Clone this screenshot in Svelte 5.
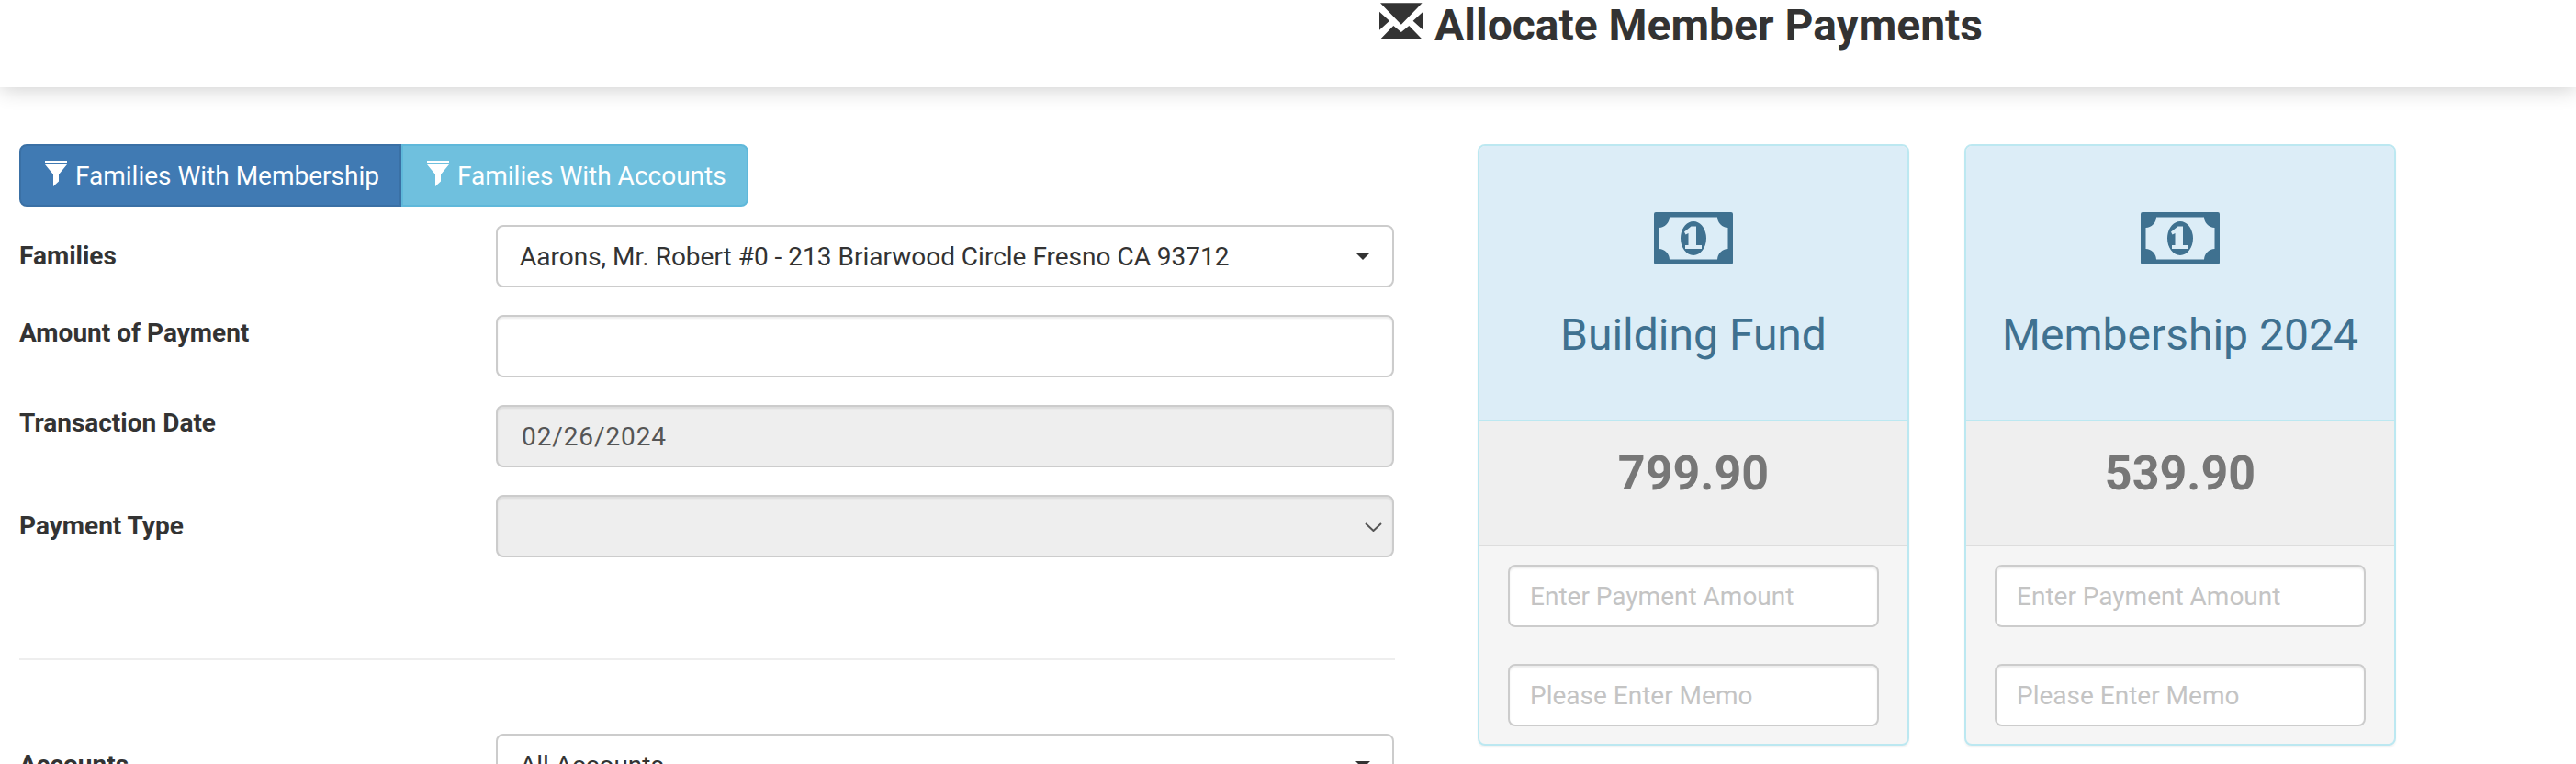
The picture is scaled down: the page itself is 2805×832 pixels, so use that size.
<script>
    const funds = [
        { name: 'Building Fund', balance: '799.90' },
        { name: 'Membership 2024', balance: '539.90' },
    ];
</script>

<div class="page">
    <header class="top">
        <h1>
            <svg class="envelope" viewBox="0 0 48 40" width="48" height="40" aria-hidden="true">
                <path d="M1 .3H46.6L23.8 23.7ZM0 9.7V29.7L11 19.7ZM47.6 9.7V29.7L36.6 19.7ZM1 39.7L15.3 25L23.8 32L32.3 25L46.6 39.7Z" />
            </svg>
            Allocate Member Payments
        </h1>
    </header>

    <main class="content">
        <section class="left">
            <div class="btn-group">
                <button class="primary">
                    <svg class="funnel" viewBox="0 0 24 28" width="24" height="28" aria-hidden="true">
                        <path d="M0 0H24V2H0ZM0 4H24L15 15V22.5L9 28V15Z" />
                    </svg>
                    Families With Membership
                </button>
                <button class="info">
                    <svg class="funnel" viewBox="0 0 24 28" width="24" height="28" aria-hidden="true">
                        <path d="M0 0H24V2H0ZM0 4H24L15 15V22.5L9 28V15Z" />
                    </svg>
                    Families With Accounts
                </button>
            </div>

            <div class="row">
                <span class="label mid">Families</span>
                <div class="picker">
                    <span>Aarons, Mr. Robert #0 - 213 Briarwood Circle Fresno CA 93712</span>
                    <i class="caret"></i>
                </div>
            </div>

            <div class="row">
                <span class="label">Amount of Payment</span>
                <input class="control" type="text" />
            </div>

            <div class="row">
                <span class="label">Transaction Date</span>
                <input class="control date" type="text" value="02/26/2024" disabled />
            </div>

            <div class="row">
                <span class="label mid">Payment Type</span>
                <div class="select-wrap">
                    <select class="control" disabled></select>
                    <svg class="chevron" viewBox="0 0 19 10" width="19" height="10" aria-hidden="true">
                        <path d="M1 1L9.5 9L18 1" />
                    </svg>
                </div>
            </div>

            <hr />

            <div class="row">
                <span class="label mid">Accounts</span>
                <div class="picker">
                    <span>All Accounts</span>
                    <i class="caret"></i>
                </div>
            </div>
        </section>

        <section class="cards">
            {#each funds as fund}
                <article class="card">
                    <div class="card-head">
                        <svg class="money" viewBox="0 0 86 57" width="86" height="57" aria-hidden="true">
                            <path fill-rule="evenodd" d="M2 0H84A2 2 0 0 1 86 2V55A2 2 0 0 1 84 57H2A2 2 0 0 1 0 55V2A2 2 0 0 1 2 0ZM17 5.5H69A12 12 0 0 0 80.5 17V40A12 12 0 0 0 69 51.5H17A12 12 0 0 0 5.5 40V17A12 12 0 0 0 17 5.5Z" />
                            <path fill-rule="evenodd" d="M43 10C50.700 10 57 18.300 57 28.500S50.700 47 43 47S29 38.700 29 28.500S35.300 10 43 10ZM40.500 15.500L33 21.500L34.500 24.500L37.500 23V36H34V40H52V36H46V15.500Z" />
                        </svg>
                        <h2>{fund.name}</h2>
                    </div>
                    <div class="card-balance">{fund.balance}</div>
                    <div class="card-foot">
                        <input class="control" type="text" placeholder="Enter Payment Amount" />
                        <input class="control" type="text" placeholder="Please Enter Memo" />
                    </div>
                </article>
            {/each}
        </section>
    </main>
</div>

<style>
    :global(body) {
        background: #fff;
        color: #333;
        font-family: Roboto, "Liberation Sans", sans-serif;
        font-size: 28px;
    }

    .page {
        height: 100vh;
        overflow: hidden;
    }

    .top {
        height: 95px;
        padding-left: 1502px;
        box-sizing: border-box;
        background: #fff;
        box-shadow: 0 2px 22px rgba(0, 0, 0, 0.2);
    }

    h1 {
        display: flex;
        gap: 12px;
        align-items: flex-start;
        margin: 0;
        padding-top: 3px;
        font-size: 48px;
        font-weight: 700;
        line-height: 50px;
        color: #333;
    }

    .envelope {
        flex: none;
        fill: #333;
    }

    .content {
        display: flex;
        gap: 90px;
        padding: 62px 0 0 21px;
    }

    .left {
        flex: none;
        width: 1498px;
    }

    .btn-group {
        display: flex;
        width: fit-content;
        margin-bottom: 20px;
    }

    button {
        display: flex;
        align-items: flex-start;
        gap: 9px;
        height: 68px;
        padding: 13px 22px 0 26px;
        border: 2px solid;
        font: inherit;
        line-height: 40px;
        color: #fff;
    }

    .funnel {
        fill: #fff;
        flex: none;
        margin-top: 3px;
    }

    .primary {
        background: #407ab3;
        border-color: #3a70a5;
        border-radius: 8px 0 0 8px;
    }

    .info {
        background: #6fc0de;
        border-color: #5fb8da;
        border-radius: 0 8px 8px 0;
    }

    .row {
        display: grid;
        grid-template-columns: 519px 978px;
        margin-bottom: 30px;
    }

    .label {
        font-weight: 700;
        line-height: 40px;
    }

    .label.mid {
        align-self: center;
    }

    .control {
        display: block;
        width: 100%;
        height: 68px;
        box-sizing: border-box;
        padding: 0 24px;
        background: #fff;
        border: 2px solid #ccc;
        border-radius: 8px;
        box-shadow: inset 0 2px 2px rgba(0, 0, 0, 0.075);
        font: inherit;
        color: #555;
        appearance: none;
    }

    .control.date {
        padding-left: 26px;
        letter-spacing: 0.9px;
    }

    .control::placeholder {
        color: #c4c4c4;
    }

    .control:disabled {
        background: #eee;
        opacity: 1;
    }

    .picker {
        display: flex;
        align-items: center;
        justify-content: space-between;
        height: 68px;
        box-sizing: border-box;
        padding: 0 24px;
        border: 2px solid #ccc;
        border-radius: 8px;
        color: #333;
    }

    .caret {
        width: 0;
        height: 0;
        border-top: 8px solid #333;
        border-left: 8px solid transparent;
        border-right: 8px solid transparent;
    }

    .select-wrap {
        position: relative;
    }

    .chevron {
        position: absolute;
        top: 30px;
        right: 13px;
        fill: none;
        stroke: #555;
        stroke-width: 2;
    }

    hr {
        height: 2px;
        margin: 110px 0 80px;
        border: 0;
        background: #eee;
    }

    .cards {
        display: flex;
        gap: 60px;
    }

    .card {
        width: 470px;
        height: 655px;
        box-sizing: border-box;
        overflow: hidden;
        border: 2px solid #bce8f1;
        border-radius: 8px;
        background: #f5f5f5;
        box-shadow: 0 2px 2px rgba(0, 0, 0, 0.05);
    }

    .card-head {
        display: flex;
        flex-direction: column;
        align-items: center;
        height: 300px;
        box-sizing: border-box;
        padding-top: 72px;
        background: #dcedf7;
        border-bottom: 2px solid #bce8f1;
        color: #3f7190;
    }

    .money {
        fill: #3f7190;
    }

    h2 {
        margin: 45px 0 0;
        font-size: 48px;
        font-weight: 400;
        line-height: 64px;
    }

    .card-balance {
        height: 136px;
        box-sizing: border-box;
        padding-top: 27px;
        background: #efefef;
        border-bottom: 2px solid #ddd;
        font-size: 52px;
        font-weight: 700;
        line-height: 60px;
        text-align: center;
        color: #777;
    }

    .card-foot {
        display: flex;
        flex-direction: column;
        gap: 40px;
        padding: 20px 31px;
    }

    .card-foot .control {
        padding: 0 22px;
    }
</style>
